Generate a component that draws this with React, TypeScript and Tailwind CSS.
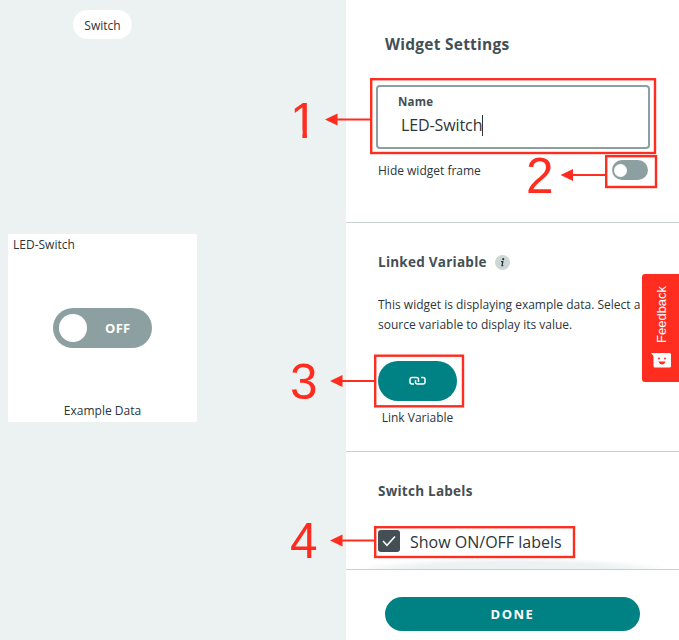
import React from "react";

const RED = "#ff2d1f";

function Annotations() {
  return (
    <svg
      className="pointer-events-none absolute inset-0 z-20"
      width="679"
      height="640"
      viewBox="0 0 679 640"
      fill="none"
      stroke={RED}
    >
      <g strokeWidth="2.4">
        <rect x="371.2" y="79.2" width="283.8" height="73.8" />
        <rect x="606.2" y="156.2" width="49.8" height="30.8" />
        <rect x="375.2" y="355.7" width="87.8" height="50.6" />
        <rect x="375.2" y="527.2" width="198.8" height="29.8" />
      </g>
      <g strokeWidth="2">
        <path d="M336 119.5H371M571 175H606M340 381H375M340 540.5H375" />
      </g>
      <g fill={RED} stroke="none">
        <path d="M325 119.5l12.500-6v12zM560.500 175l12.500-6v12zM330 381l12.500-6v12zM330 540.500l12.500-6v12z" />
      </g>
    </svg>
  );
}

const numeral =
  "absolute z-20 font-['Liberation_Sans',Arial,sans-serif] text-[49.5px] leading-[48px] text-[#ff2d1f]";

function Preview() {
  return (
    <section className="flex h-full w-[346px] shrink-0 flex-col bg-[#ecf1f1]">
      <div className="ml-[73px] mt-[10px] flex h-[29px] w-[59px] items-center justify-center rounded-full bg-white pt-[2px] text-[12px]">
        <span>Switch</span>
      </div>
      <div className="ml-2 mt-[195px] flex h-[188px] w-[189px] flex-col bg-white text-[12px] leading-4">
        <div className="pl-[5px] pt-[3px]">LED-Switch</div>
        <div className="ml-[45px] mt-[55px] flex h-10 w-[99px] items-center rounded-full bg-[#8ca0a1] pl-[6px]">
          <div className="size-7 rounded-full bg-white" />
          <span className="ml-[18px] text-[13px] font-bold tracking-[0.3px] text-white">OFF</span>
        </div>
        <div className="mt-[55px] text-center">Example Data</div>
      </div>
    </section>
  );
}

function Settings() {
  return (
    <section className="flex h-full w-[333px] flex-col bg-white">
      <div className="flex h-[223px] flex-col border-b border-[#c8d1d2] pl-[30px]">
        <h1 className="ml-[9px] mt-[33px] h-[22px] text-[15.5px] font-bold leading-[23px] tracking-[0.25px] text-[#434f54]">
          Widget Settings
        </h1>
        <div className="mt-[30px] flex h-[64px] w-[274px] flex-col rounded-[4px] border-[2.5px] border-[#8ca0a1] pl-[20px]">
          <label className="mt-[7px] text-[11.5px] font-bold leading-4 tracking-[0.2px] text-[#434f54]">Name</label>
          <div className="mt-[4px] flex h-[22px] items-center pl-[3px] text-[16px] leading-[22px] tracking-[-0.1px]">
            <span>LED-Switch</span>
            <span className="h-[21px] w-px bg-[#2c353a]" />
          </div>
        </div>
        <div className="mt-[11px] flex h-5 w-[272px] items-center justify-between pl-[2px] text-[12px]">
          <span className="pt-[2px]">Hide widget frame</span>
          <div className="flex h-5 w-9 items-center rounded-full bg-[#8ca0a1] pl-[2px]">
            <div className="size-[13px] rounded-full bg-white" />
          </div>
        </div>
      </div>

      <div className="flex h-[229px] flex-col border-b border-[#c8d1d2] pl-8">
        <div className="mt-[29px] flex h-5 items-center">
          <h2 className="text-[13.5px] font-bold leading-5 tracking-[0.25px] text-[#434f54]">Linked Variable</h2>
          <svg className="ml-[8px]" width="15" height="15" viewBox="0 0 15 15">
            <circle cx="7.500" cy="7.500" r="7.500" fill="#cdd7d7" />
            <circle cx="8.200" cy="4.200" r="1.100" fill="#2c353a" />
            <path d="M6 6.700h1.800l-.8 4h1.300" fill="none" stroke="#2c353a" strokeWidth="1.300" />
          </svg>
        </div>
        <p className="mt-[22.5px] whitespace-nowrap text-[12px] leading-[20.5px]">
          This widget is displaying example data. Select a
          <br />
          source variable to display its value.
        </p>
        <button className="mt-[25.5px] flex h-10 w-[79px] items-center justify-center rounded-full bg-[#008184]">
          <svg width="17" height="10" viewBox="0 0 17 10" fill="none" stroke="#fff" strokeWidth="1.500">
            <path d="M5 8H3A2 2 0 0 1 1 6V3.500A2 2 0 0 1 3 1.500H7.500A2 2 0 0 1 9.500 3.500V6" />
            <path d="M12 1.500H14A2 2 0 0 1 16 3.500V6A2 2 0 0 1 14 8H8.500A2 2 0 0 1 6.500 6V4" />
          </svg>
        </button>
        <div className="mt-[9px] w-[79px] whitespace-nowrap text-center text-[12px] leading-4">Link Variable</div>
      </div>

      <div className="relative flex h-[118px] flex-col overflow-hidden border-b border-[#c8d1d2] pl-8">
        <h2 className="mt-[29px] h-5 text-[13.5px] font-bold leading-5 tracking-[0.25px] text-[#434f54]">Switch Labels</h2>
        <div className="mt-[29px] flex h-[22px] items-center">
          <div className="flex size-[22px] items-center justify-center rounded-[3px] bg-[#434f54]">
            <svg width="14" height="12" viewBox="0 0 14 12" fill="none" stroke="#fff" strokeWidth="1.500">
              <path d="M1 6l4 4.300L13 1.500" />
            </svg>
          </div>
          <span className="ml-[10px] pt-px text-[16px]">Show ON/OFF labels</span>
        </div>
        <div className="absolute -bottom-[11px] left-[8px] h-[22px] w-[317px] rounded-[50%] bg-[radial-gradient(closest-side,#ecf1f1_60%,transparent)]" />
      </div>

      <div className="flex flex-1 justify-center pt-[27px]">
        <button className="flex h-[34px] w-[255px] items-center justify-center rounded-full bg-[#008184] pt-px text-[13px] font-bold tracking-[1.500px] text-white">
          DONE
        </button>
      </div>
    </section>
  );
}

function Feedback() {
  return (
    <div className="absolute right-0 top-[274px] z-30 flex h-[108px] w-[37px] flex-col items-center rounded-l-[3px] bg-[#ff2d1f] pt-[11px]">
      <span className="ml-[3px] h-[58px] rotate-180 font-['Liberation_Sans',Arial,sans-serif] text-[13px] leading-[16px] text-white [writing-mode:vertical-rl]">
        Feedback
      </span>
      <svg className="mt-[10px]" width="20" height="15" viewBox="0 0 20 15">
        <path d="M0 0H18.500Q20 0 20 1.500V13Q20 14.500 18.500 14.500H4Q2.500 14.500 2.500 13V3Z" fill="#fff" />
        <circle cx="8" cy="5.500" r="1" fill="#ff2d1f" />
        <circle cx="14" cy="5.500" r="1" fill="#ff2d1f" />
        <path d="M7.500 8.500h7q-1 3-3.500 3t-3.500-3z" fill="#ff2d1f" />
      </svg>
    </div>
  );
}

export default function App() {
  return (
    <main className="relative flex h-[640px] w-[679px] overflow-hidden bg-white font-['Open_Sans','Noto_Sans',sans-serif] text-[#2c353a]">
      <Preview />
      <Settings />
      <Feedback />
      <Annotations />
      <span className={`${numeral} left-[290px] top-[97px] [clip-path:polygon(0_0,100%_0,100%_70%,61.5%_70%,61.5%_100%,45%_100%,45%_70%,0_70%)]`}>1</span>
      <span className={`${numeral} left-[526px] top-[152px]`}>2</span>
      <span className={`${numeral} left-[290px] top-[358px]`}>3</span>
      <span className={`${numeral} left-[290px] top-[517px]`}>4</span>
    </main>
  );
}
